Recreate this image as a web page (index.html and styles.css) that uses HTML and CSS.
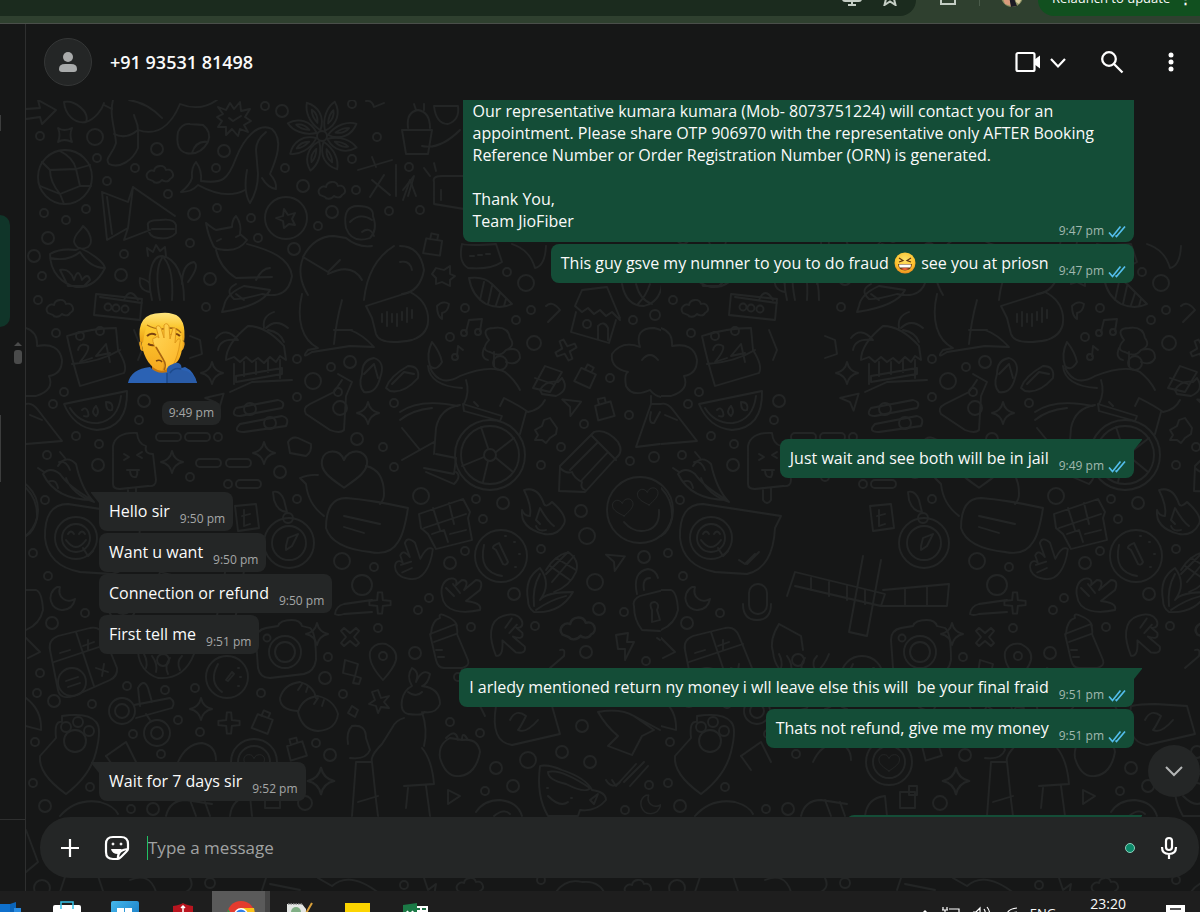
FILE: index.html
```html
<!DOCTYPE html>
<html lang="en">
<head>
    <meta charset="UTF-8">
    <meta name="viewport" content="width=device-width, initial-scale=1.0">
    <title>Chat</title>
    <link rel="stylesheet" href="styles.css">
</head>
<body>

    <!-- shared icons -->
    <svg class="defs" aria-hidden="true">
        <symbol id="ticks" viewBox="0 0 18 13">
            <path d="M1 7.5 L4.5 11.5 L12.5 1.5 M7.5 10.5 L8.5 11.5 L17 1.5" fill="none" stroke="#53bdeb" stroke-width="1.7"/>
        </symbol>
    </svg>

    <div class="browser-bar">
        <div class="browser-row">
            <div class="omnibox">
                <svg width="20" height="20" viewBox="0 0 20 20" fill="none" stroke="#c4cdc4" stroke-width="2"><path d="M1 1 V13 Q1 15 3 15 H17 Q19 15 19 13 V1 M6 19 H14 M10 15 V19"/></svg>
                <svg width="18" height="20" viewBox="0 0 18 20" fill="none" stroke="#c4cdc4" stroke-width="2"><path d="M9 2 L11.500 8 L17 9 L13 13 L14.500 19 L9 15.500 L3.500 19 L5 13 L1 9 L6.500 8 Z"/></svg>
            </div>
            <svg class="ext" width="18" height="20" viewBox="0 0 18 20" fill="none" stroke="#c4cdc4" stroke-width="2"><path d="M2 2 H16 V18 H2 Z"/></svg>
            <span class="bar-sep"></span>
            <svg class="profile" width="24" height="24" viewBox="0 0 24 24">
                <circle cx="12" cy="12" r="11" fill="#8a8f62"/>
                <path d="M3 15 L9 12 L11 22 L5 20 Z" fill="#d99b7c"/>
                <path d="M9 12 L13 12 L17 22 L11 23 Z" fill="#1c1a24"/>
                <path d="M15 12 L22 14 L19 20 L16 18 Z" fill="#d8c79a"/>
            </svg>
            <button class="relaunch">Relaunch to update <span class="relaunch-dots">⋮</span></button>
        </div>
    </div>

    <div class="app">
        <div class="sidebar">
            <div class="side-edge side-edge-small"></div>
            <div class="side-chat"></div>
            <svg class="side-scroll" width="10" height="24" viewBox="0 0 10 24"><path d="M1 5 L5 1 L9 5 Z" fill="#4a4b4b"/><rect x="1" y="9" width="8" height="14" rx="3" fill="#4a4b4b"/></svg>
            <div class="side-edge side-edge-tall"></div>
            <div class="side-foot"></div>
        </div>

        <main class="chat">
            <header class="chat-header">
                <div class="avatar">
                    <svg width="20" height="22" viewBox="0 0 20 22" fill="#a9abab"><circle cx="10" cy="6" r="5"/><path d="M1 18 Q1 13 7 13 H13 Q19 13 19 18 Q19 21 16 21 H4 Q1 21 1 18 Z"/></svg>
                </div>
                <h1 class="contact">+91 93531 81498</h1>
                <button class="icon-btn video-btn" aria-label="Video call">
                    <svg width="26" height="22" viewBox="0 0 26 22"><rect x="1.500" y="2" width="18" height="18" rx="1.500" fill="none" stroke="#fff" stroke-width="2.200"/><path d="M19 9 L25 4.500 V17.500 L19 13 Z" fill="#fff"/></svg>
                    <svg width="18" height="22" viewBox="0 0 18 22" fill="none" stroke="#fff" stroke-width="2.200"><path d="M2 8 L9 15.500 L16 8"/></svg>
                </button>
                <button class="icon-btn" aria-label="Search">
                    <svg width="24" height="24" viewBox="0 0 24 24" fill="none" stroke="#fff" stroke-width="2.300"><circle cx="9" cy="9" r="6.800"/><path d="M14 14 L22.500 22.500"/></svg>
                </button>
                <button class="icon-btn" aria-label="Menu">
                    <svg width="6" height="22" viewBox="0 0 6 22" fill="#fff"><circle cx="3" cy="4" r="2.500"/><circle cx="3" cy="11" r="2.500"/><circle cx="3" cy="18" r="2.500"/></svg>
                </button>
            </header>

            <div class="chat-body">
                <!-- wallpaper tile -->
                <svg class="wallpaper" aria-hidden="true">
                    <defs>
                        <path id="cloud" d="M-12 5 C-16 0 -10 -5 -6 -3 C-5 -9 4 -10 6 -4 C12 -6 16 2 10 5 C8 9 3 7 2 6 C-1 10 -6 9 -7 7 Z"/>
                        <path id="spark" d="M0 -11 Q2 -2 11 0 Q2 2 0 11 Q-2 2 -11 0 Q-2 -2 0 -11 Z"/>
                        <path id="cross" d="M-9 -6 L-6 -9 L0 -4 L6 -9 L9 -6 L4 0 L9 6 L6 9 L0 4 L-6 9 L-9 6 L-4 0 Z"/>
                        <path id="bolt" d="M-8 -11 L4 -13 L3 -4 L10 -4 L1 14 L1 3 L-6 3 Z"/>
                        <path id="dart" d="M-10 -6 L9 -7 L1 9 L-1 0 Z"/>
                        <path id="tag" d="M-8 -5 L8 -6 L9 9 L-8 10 Z M-4 -5 V-11 H3 V-6"/>
                        <path id="heart" d="M0 16 C-10 9 -22 2 -20 -9 C-18 -19 -4 -20 0 -9 C4 -20 20 -19 21 -8 C22 2 10 9 0 16 Z"/>
                        <path id="petal" d="M0 -6 C-9 -16 -10 -28 -6 -36 C4 -30 8 -18 0 -6 M-1 -14 Q-5 -22 -3 -28 Q2 -22 -1 -14"/>
                        <path id="moon" d="M-6 -11 C-18 -4 -12 13 0 12 Q10 11 12 1 C3 6 -6 -1 -3 -11 Z"/>
                        <path id="hand" d="M-16 -2 C-20 -22 2 -24 -2 -13 L4 -18 Q12 -18 6 -8 L18 -18 Q26 -18 22 -8 L8 3 C16 4 24 6 22 12 C4 16 -14 14 -16 -2 Z M-12 -10 L-4 -2 M-5 -14 L2 -5"/>
                    </defs>
                    <pattern id="doodles" patternUnits="userSpaceOnUse" width="635" height="800">
                        <g transform="translate(-26 -100)" fill="none" stroke="#232525" stroke-width="1.800" stroke-linejoin="round" stroke-linecap="round">
                            <!-- top row: arrow, leaf, stocking, peach, burst, whale, anise -->
                            <path d="M26 109 L40 108 L38 100 L56 110 L42 124 L40 117 L26 119"/>
                            <path d="M64 102 C65 115 75 124 86 122 C95 119 102 110 104 103 M64 102 C75 100 90 112 86 122 M104 105 L112 109"/>
                            <path d="M113 100 C109 115 115 128 116 143 C113 154 104 158 109 164 C120 169 133 160 138 148 L138 130 C138 122 135 120 134 115 M114 134 Q126 140 138 130 M138 130 C155 136 170 128 180 104 Q200 112 217 100 M129 100 Q148 103 162 118"/>
                            <path d="M58 128 Q64 132 72 128 Q69 135 72 142 Q64 138 58 142 Q61 135 58 128 Z"/>
                            <path d="M178 132 Q182 123 190 124 L203 125 Q212 132 208 142 Q200 156 186 153 Q175 150 178 132 Z M208 142 Q196 140 192 153"/>
                            <path d="M218 107 L226 110 L230 103 L234 109 L240 102 L241 111 L250 109 L245 117 L251 121 L244 125 L248 132 L240 129 L238 136 L232 129 L226 135 L226 127 L218 127 L222 121 L217 117 L223 114 Z M229 118 L233 121 L241 116"/>
                            <path d="M181 192 Q190 185 192 178 Q191 168 196 162 Q202 170 201 181 C222 184 228 180 236 158 C244 138 258 122 272 129 C284 140 276 160 270 174 Q277 182 276 189 Q268 188 262 178 M181 192 Q192 192 198 185 C218 196 234 196 245 190 M247 170 Q243 192 250 203 Q258 190 258 174 L256 150 Q256 140 266 132"/>
                            <circle cx="322" cy="136" r="5"/>
                            <use href="#petal" transform="translate(322 136) rotate(-15)"/><use href="#petal" transform="translate(322 136) rotate(30)"/><use href="#petal" transform="translate(322 136) rotate(80)"/><use href="#petal" transform="translate(322 136) rotate(118)"/><use href="#petal" transform="translate(322 136) rotate(165)"/><use href="#petal" transform="translate(322 136) rotate(208)"/><use href="#petal" transform="translate(322 136) rotate(250)"/><use href="#petal" transform="translate(322 136) rotate(300)"/>
                            <path d="M366 101 Q372 100 374 107 L384 103 M358 170 L392 160 M372 157 L376 167 M370 197 L384 175 M372 180 L390 195 M396 165 V196 M403 200 L410 180 L416 196"/>
                            <!-- globe, map, lamp, cactus -->
                            <circle cx="65" cy="177" r="27"/>
                            <path d="M42 162 L50 170 L76 169 L90 165 M50 170 C50 180 55 188 60 194 L80 186 L76 169 C74 160 66 154 60 151 M40 186 L60 194 L64 204 M80 186 L91 186"/>
                            <path d="M102 192 L107 240 L128 228 L124 240 L150 230 M102 192 L128 202 L133 187 L175 216 M133 187 L128 228 M107 197 L112 234 M148 226 Q146 220 160 220 Q174 218 176 225 V233 Q170 240 158 238 Q148 237 148 226 Z M152 229 H174"/>
                            <path d="M50 254 Q60 248 76 250 L80 248 C90 252 104 262 105 268 C98 282 88 288 76 287 C62 284 50 272 50 254 Z M50 258 Q68 262 80 252 Q90 268 105 268 M74 242 C74 234 80 232 83 226 C90 232 94 242 88 247 Q78 252 74 242 M60 270 Q70 268 74 280 Q78 266 82 280 Q88 272 90 280 L84 286 H68 Z"/>
                            <path d="M152 300 C146 275 152 256 162 256 C176 258 184 276 184 300 M160 300 Q154 270 162 258 M172 300 Q174 270 164 258 M150 292 Q138 290 140 278 Q148 280 150 284 M182 284 Q182 264 194 262 Q200 266 188 282 M148 256 L147 248 L153 252 L156 245 L160 251 L165 247 L166 256"/>
                            <!-- coin, fox, person -->
                            <circle cx="286" cy="218" r="21"/>
                            <path d="M284 209 L288 215 L295 213 L292 219 L295 225 L289 224 L284 228 L283 221 L276 218 L283 216 Z"/>
                            <path d="M206 223 Q212 228 216 230 L232 227 Q232 220 236 216 Q242 224 240 234 L247 240 Q240 250 228 250 Q214 250 213 245 Q208 235 206 223 Z M217 241 l4 -2 M236 237 l4 -2 M247 244 C270 250 290 258 292 276 Q288 300 262 294 Q240 300 234 299 Q224 290 236 284 M216 250 Q220 268 236 278 L272 277 M256 280 Q262 268 270 268"/>
                            <path d="M346 228 Q342 206 358 206 Q374 206 373 216 Q378 230 370 238 Q352 244 346 228 M350 222 Q360 212 372 220 M362 232 Q370 226 374 236 M303 257 Q314 236 334 236 L346 238 Q358 248 372 246 M303 257 L328 272 L340 260 M303 258 Q296 275 308 295 M328 274 Q352 262 362 280 M364 300 Q368 262 394 246"/>
                            <path d="M302 294 C296 320 302 340 318 348 L308 350 Q300 360 312 352 L350 346 L374 347 Q362 334 350 330 M342 300 Q336 322 334 344 M334 330 H352 M366 306 L410 292 Q426 300 428 316 Q430 334 412 340 Q380 346 376 334 L372 318 Z M382 322 v-8 M387 326 v-14 M392 322 v-8 M397 326 v-12 M402 320 v-8 M407 322 v-14 M412 318 v-8"/>
                            <!-- lamp and pot right of the person -->
                            <path d="M402 130 H432 L428 154 H406 Z M408 128 Q406 112 418 110 Q430 112 430 128 M414 104 L416 110 M424 104 V110 M434 106 Q436 124 448 124 Q460 120 458 106 Z M422 146 Q440 150 460 130"/>
                            <path d="M403 190 L414 176 L408 196 M434 182 Q432 176 442 176 H470 V210 L434 204 Z M441 190 V200 M424 168 L430 176 M434 163 L436 171"/>
                            <path d="M400 246 Q420 246 424 270 Q420 292 402 294 M400 262 Q410 260 412 270 M462 244 Q470 246 496 244 L502 262 Q490 270 468 268 Q458 262 462 244 Z M470 256 h4 M478 255 h4 M486 254 h4 M512 244 Q530 250 535 268 Q545 266 546 246"/>
                            <use href="#tag" transform="translate(433 245) rotate(12)"/>
                            <path d="M436 268 L444 270 L450 266 L450 274 L455 276 L450 280 L450 286 L442 282 L436 284 L436 278 L432 274 Z"/>
                            <!-- shell, house, ball -->
                            <path d="M469 278 Q484 276 492 284 L512 304 Q500 310 486 304 Q472 296 469 278 Z M484 282 L480 300 M492 286 L488 304 M500 293 L496 305 M506 299 L504 306"/>
                            <path d="M575 306 L582 290 L607 287 L620 318 M575 306 L582 312 L588 308 L594 314 L600 310 L606 316 L612 312 L620 320 M576 312 L571 332 L609 343 L616 320 M598 339 V326 Q604 320 608 328 V340"/>
                            <circle cx="587" cy="324" r="4"/>
                            <path d="M622 284 Q626 306 644 306 Q660 302 662 284 M636 284 Q640 300 652 304 M650 284 Q646 296 638 304"/>
                            <!-- music notes, mike, flowers, guitar -->
                            <path d="M437 306 Q443 300 449 304 Q448 312 442 313 L442 319 Q437 316 437 306 M546 306 Q552 300 560 310 L548 322 M466 332 L469 320 L482 319 L480 331 M457 356 L458 346 L463 350"/>
                            <circle cx="464" cy="333" r="3"/><circle cx="478" cy="332" r="3"/><circle cx="455" cy="357" r="3"/>
                            <path d="M489 340 Q480 328 494 328 Q508 326 510 338 Q516 346 506 350 Q500 358 490 352 Q480 350 489 340 M494 352 V366 M506 350 Q520 346 520 358 Q516 366 506 362 M488 360 Q480 358 484 348 M432 342 Q440 352 442 362 Q436 372 430 366 Q426 354 432 342 M430 368 Q440 388 460 376 Q490 364 505 372 Q515 380 520 390"/>
                            <circle cx="500" cy="363" r="7"/>
                            <path d="M428 366 Q430 386 462 388 M533 388 L545 366 L562 372 L550 392 Z M535 378 L553 384"/>
                            <path d="M540 390 Q546 380 558 382 L562 378 Q570 390 556 396 L542 394 Z"/>
                            <use href="#cross" transform="translate(566 350) rotate(20)"/>
                            <use href="#tag" transform="translate(586 376) rotate(28)"/>
                            <!-- tree and volcano -->
                            <path d="M640 347 Q634 328 654 328 Q672 332 670 346 Q692 342 696 360 Q696 374 682 376 Q688 392 670 396 Q658 400 650 390 Q632 398 626 386 Q624 374 628 372 Q610 368 612 354 Q622 340 640 347 Z"/>
                            <path d="M642 360 Q650 350 658 360 M651 396 V404 L636 447 L660 444 M652 404 H661 M26 404 Q32 402 38 410 L62 441 L26 444 M30 415 L42 420 M651 412 Q648 424 654 423 L660 412"/>
                            <path d="M26 328 Q38 332 37 346 Q59 342 62 360 Q62 374 49 376 Q55 390 36 396 L26 396"/>
                            <!-- cassette, calendar, palm hut -->
                            <use href="#cloud" transform="translate(60 308)"/><use href="#cloud" transform="translate(160 174)"/><use href="#cloud" transform="translate(332 190)"/>
                            <path d="M96 294 L142 299 L140 320 L94 315 Z M100 297 L142 303"/>
                            <circle cx="108" cy="307" r="3.500"/><circle cx="116" cy="308" r="3.500"/><circle cx="125" cy="309" r="3.500"/>
                            <path d="M67 336 Q92 328 116 328 L118 350 Q128 366 124 373 L80 386 Q72 360 67 336 Z M72 364 Q100 362 120 350 M78 350 Q80 342 88 346 Q90 350 80 362 L92 358 M96 356 L106 344 L110 362 M96 356 L110 353"/>
                            <circle cx="80" cy="336" r="4"/><circle cx="100" cy="331" r="4"/>
                            <path d="M216 338 Q226 326 238 340 Q220 338 218 350 M264 328 Q262 316 274 312 M266 328 Q276 318 288 328 M268 330 Q280 332 284 342 M226 360 Q226 344 248 326 Q266 326 284 346 L286 360 L280 356 L276 362 L270 357 L264 363 L258 358 L252 362 L246 357 L240 362 L234 357 Z M234 364 V384 M244 362 V376 M256 362 V374 M268 360 V372 M280 360 V378 M236 376 L282 368 V374 L236 382 Z M230 392 L252 382 L292 380"/>
                            <use href="#spark" transform="translate(212 373)"/>
                            <path d="M190 336 L200 340 L202 354 L190 358 M134 330 L142 350 L138 360 M124 300 Q130 286 138 300"/>
                            <path d="M224 306 Q226 294 244 286 L270 290 Q262 306 222 312 Z M236 294 L244 300"/>
                            <!-- sandals, flask -->
                            <path d="M362 374 Q362 360 374 358 Q386 362 380 378 Q376 394 364 392 Q358 386 362 374 Z M364 374 L374 364 L378 378 M386 388 Q390 376 408 366 Q420 366 418 378 Q404 394 390 391 Z M392 384 L404 372 L414 374"/>
                            <path d="M338 374 L352 382 L346 396 L344 430 Q340 434 330 430 L306 414 Q302 408 310 404 L334 392 L342 380"/>
                            <circle cx="340" cy="408" r="7"/><circle cx="338" cy="392" r="4"/>
                            <use href="#spark" transform="translate(368 413)"/>
                            <!-- watermelon and sliders -->
                            <path d="M64 404 L127 391 Q128 428 97 430 Q74 428 64 404 Z M70 408 Q80 424 98 423 Q118 420 121 396 M82 410 q4 -4 6 2 t-4 4 M96 406 q4 6 0 10 q-6 -4 0 -10 M106 402 q8 0 6 8 q-6 2 -6 -8"/>
                            <path d="M236 408 L278 400 Q286 402 282 408 L240 416 Q230 416 236 408 Z M240 424 L282 416 Q290 418 286 426 L244 432 Q232 432 240 424 Z"/>
                            <circle cx="250" cy="409" r="6"/><circle cx="270" cy="423" r="6"/>
                            <rect x="156" y="433" width="25" height="8" rx="4"/><rect x="185" y="433" width="25" height="8" rx="4"/><rect x="196" y="459" width="25" height="8" rx="4"/><rect x="226" y="459" width="25" height="8" rx="4"/><rect x="236" y="480" width="25" height="8" rx="4"/>
                            <use href="#dart" transform="translate(216 402) rotate(-10)"/>
                            <!-- popsicle, chillies -->
                            <path d="M113 484 V446 Q116 432 137 433 Q138 444 146 446 Q144 454 153 454 L156 480 Q156 487 148 486 L120 489 Q113 489 113 484 Z M124 454 l5 3 l-5 3 M142 452 l-5 3 l5 3 M127 470 H139 M130 470 Q130 478 136 477 Q138 474 137 470 M128 488 V500 Q132 506 136 500 V488"/>
                            <path d="M59 462 Q66 460 70 470 M60 452 L65 458 M43 474 Q50 466 60 474 Q68 486 92 500 Q56 500 43 474 Z M58 466 Q66 454 76 464 C80 482 86 494 94 502 Q72 494 66 478 M38 468 L44 472 M48 482 Q56 478 58 488"/>
                            <use href="#spark" transform="translate(172 462)"/><use href="#spark" transform="translate(264 453)"/>
                            <path d="M288 442 Q292 436 298 438 L311 444 Q312 452 306 456 L290 453 Z"/>
                            <!-- hearts and speech bubbles -->
                            <use href="#heart" transform="translate(344 470) scale(1.1)"/>
                            <path d="M300 478 Q310 474 318 475 M300 478 L306 484 Q308 504 324 516 M366 466 Q384 470 384 494 Q384 500 380 504 M326 528 Q326 498 346 498 Q372 500 408 508 Q404 534 398 542 Q390 556 370 552 Q332 548 326 528 Z M344 516 L380 524 M344 527 L364 533"/>
                            <path d="M45 538 Q44 504 68 504 L146 516 L140 528 Q138 568 112 574 L80 572 Q48 566 45 538 Z M235 506 L256 504 L259 528 L238 531 Z M244 510 V526 M242 516 L250 514 M244 526 L250 524"/>
                            <circle cx="76" cy="538" r="21"/><circle cx="76" cy="538" r="14"/><path d="M68 534 q3 -5 6 0 M79 534 q3 -5 6 0 M66 540 Q76 554 86 540 M83 548 l5 8 l5 -5 M104 560 L110 564 L120 554 M112 564 L124 552"/>
                            <circle cx="289" cy="543" r="25"/><circle cx="289" cy="543" r="17"/><path d="M286 546 L288 538 L298 534 L292 546 L286 550 Z"/><circle cx="288" cy="518" r="5"/><path d="M273 492 Q280 490 284 500 L287 512 Q278 512 274 500 Z"/>
                            <path d="M26 488 Q38 500 37 518 Q34 532 26 536"/>
                            <!-- crossword and mic, mostly under the replies -->
                            <path d="M152 596 L160 572 L250 594 L246 606 L160 586 M246 560 L232 636 L214 632 L228 556 M176 578 V590 M194 582 V596 M212 586 V600 M230 590 V604 M248 590 L314 584 L312 606 L246 606 M270 588 V606 M292 586 V606"/>
                            <rect x="114" y="584" width="18" height="30" rx="9"/><path d="M108 604 Q108 620 122 620 Q136 620 136 604"/>
                            <!-- wheelchair sports -->
                            <circle cx="490" cy="455" r="35"/><circle cx="490" cy="455" r="29"/><circle cx="490" cy="455" r="6"/>
                            <path d="M488 448 L481 427 M496 452 L514 438 M496 458 L513 472 M488 461 L483 482 M484 457 L462 466 M463 404 L502 416 L500 421 L464 411 Z M474 402 L478 406 M460 405 Q440 408 436 428 L434 454 M436 454 L456 458 L454 474 L424 468 M402 460 L434 442 M400 412 Q420 398 458 406 M400 420 Q412 410 432 408 M402 428 L420 450 M426 472 L454 484 Q462 476 456 472 M464 404 Q470 392 466 380 M500 406 L504 398 Q520 406 528 412 Q540 410 545 400 M526 412 L520 434"/>
                            <!-- paper darts, tag, pencil, fire -->
                            <use href="#dart" transform="translate(571 407) rotate(10)"/>
                            <use href="#tag" transform="translate(604 409) rotate(-12)"/>
                            <path d="M535 430 L542 426 L544 420 L550 418 L557 428 L556 434 L550 438 L546 443 L542 440 L535 440 L538 435 Z"/>
                            <path d="M560 466 L594 432 Q606 428 618 442 Q624 452 616 458 L585 492 L559 491 Z M560 468 Q566 474 572 472 Q574 478 582 482 Q580 488 585 490 M592 436 L616 460 M598 442 L570 470 M608 452 L582 480"/>
                            <path d="M522 510 Q524 516 530 516 Q532 506 524 490 Q538 486 544 504 Q546 508 552 502 Q568 516 564 524 Q558 536 544 534 Q520 528 522 510 Z M540 524 L536 520 L540 508 Q548 522 554 526 M536 526 Q538 532 546 530"/>
                            <!-- chocolate, clock, corn -->
                            <path d="M419 514 L463 499 L470 512 L468 518 L472 540 L436 549 L428 534 L421 528 Z M433 508 L440 530 M449 503 L454 524 M424 528 L466 514 M450 534 L466 530 M432 534 L444 530 L448 542"/>
                            <circle cx="501" cy="556" r="26"/>
                            <path d="M493 548 Q492 546 499 543 L508 562 Q506 566 503 564 L496 550 Z M484 545 Q478 572 502 576 M505 536 h1 M514 542 h1 M519 554 h1 M515 567 h1"/>
                            <path d="M528 600 Q524 578 540 568 Q552 584 540 600 Q546 592 573 592 Q560 614 534 612 Q528 608 528 600 Z M534 606 Q532 588 540 574 M536 610 Q550 600 566 596 M546 570 Q554 556 568 552 Q580 560 576 572 Q570 586 554 592 M550 566 L570 580 M556 558 L576 570 M574 556 L552 582 M568 552 L546 574"/>
                            <use href="#dart" transform="translate(615 562) rotate(8)"/>
                            <!-- heart eyes -->
                            <circle cx="640" cy="510" r="33"/><circle cx="5" cy="510" r="33"/><use href="#heart" transform="translate(623 508) scale(.5) rotate(-8)"/><use href="#heart" transform="translate(648 497) scale(.5) rotate(-8)"/><path d="M624 522 Q634 534 648 530 Q660 526 659 510"/>
                            <!-- hands, padlock -->
                            <use href="#hand" transform="translate(415 565) scale(.95) rotate(-70)"/>
                            <use href="#hand" transform="translate(458 598)"/>
                            <use href="#hand" transform="translate(504 632) rotate(80)"/>
                            <path d="M634 606 Q632 600 640 596 L664 590 M634 606 Q634 620 642 630 L660 631 M637 594 Q632 572 648 569 Q656 570 658 578 M644 590 Q642 578 650 578 M652 610 Q648 602 655 602 Q660 604 657 610 L660 620 L652 622 Z"/>
                            <path d="M26 590 L36 590 Q42 592 43 610 Q40 624 26 630"/>
                            <!-- bottle, cloud, bolt, cap -->
                            <path d="M430 634 L456 624 Q458 632 457 634 L468 660 Q470 666 462 668 L444 668 Q438 668 436 660 Z M431 634 Q432 620 440 618 Q438 612 446 616 Q456 620 457 626 M434 642 L456 634 M436 650 h6 M438 657 h6"/>
                            <use href="#cloud" transform="translate(578 628) scale(1.3)"/>
                            <use href="#bolt" transform="translate(624 646)"/>
                            <path d="M657 638 L660 640 M26 638 L40 652 L28 658"/>
                            <!-- calculator, basket, stopwatch -->
                            <path d="M50 650 Q48 640 58 636 L90 628 Q100 626 104 636 L117 668 Q118 676 110 680 L74 696 Q60 700 58 690 Z M76 632 L94 686 M54 662 L108 644 M60 653 L70 650 M88 640 V650 M83 646 L94 642 M96 668 L108 672 M104 664 L102 676"/>
                            <circle cx="72" cy="682" r="14"/><path d="M66 681 L78 677 M68 687 L80 683"/>
                            <path d="M144 624 L166 636 L168 650 M144 624 Q134 640 138 652 Q140 672 158 678 Q184 680 194 654 M144 654 q4 8 2 14 M152 656 q6 8 4 16 M168 674 q-4 -8 2 -16 M180 670 q-4 -8 2 -14"/><circle cx="163" cy="660" r="6"/>
                            <circle cx="227" cy="677" r="21"/><path d="M218 664 Q208 682 222 692 M226 680 L232 672 L234 674 L228 681 Z M238 668 h1 M240 677 h1 M238 686 h1"/>
                            <!-- camera, pin, buns, dice -->
                            <circle cx="285" cy="652" r="16"/><circle cx="285" cy="652" r="10"/>
                            <path d="M256 640 Q256 630 266 628 L278 626 Q280 620 292 620 Q300 620 302 626 L310 628 Q316 632 316 660 Q314 672 304 674 L270 678 Q260 678 258 668 Z"/><circle cx="267" cy="638" r="3.500"/>
                            <use href="#spark" transform="translate(317 634)"/><use href="#cross" transform="translate(350 637)"/>
                            <path d="M383 680 Q368 664 370 652 Q374 642 386 644 Q398 650 396 660 Q394 668 383 680 Z"/><circle cx="383" cy="656" r="4"/>
                            <path d="M345 660 L358 664 L355 676 L343 673 Z M355 676 L361 678 L359 684 L353 683 Z M352 706 L358 710 L355 717 L348 713 Z"/>
                            <path d="M335 614 Q336 606 344 604 L372 600 M335 614 Q338 616 344 614 L372 612"/><use href="#cross" transform="translate(380 603) rotate(45)"/>
                            <path d="M298 711 Q280 710 280 698 Q284 684 300 682 Q314 686 316 698 M298 712 Q302 698 318 696 Q334 700 338 714 Q336 730 318 731 Q302 730 298 712 Z M298 690 l4 -6 M306 692 l2 -6 M314 704 l4 -6 M322 706 l2 -6"/>
                            <path d="M378 690 L381 698 L389 696 L384 702 L389 708 L381 707 L378 713 L376 706 L369 704 L375 700 L372 692 Z"/>
                            <!-- scissors, bone, tags -->
                            <circle cx="122" cy="711" r="13"/><circle cx="122" cy="711" r="7"/><circle cx="157" cy="733" r="13"/><circle cx="157" cy="733" r="6"/>
                            <path d="M134 705 L170 698 Q176 702 172 708 L136 718 M140 706 L138 688 Q144 678 148 688 L152 702 M146 714 L150 720"/>
                            <use href="#spark" transform="translate(201 709)"/><use href="#cross" transform="translate(229 723) rotate(45)"/>
                            <use href="#tag" transform="translate(263 722) rotate(24)"/><use href="#tag" transform="translate(296 749) rotate(-14)"/>
                            <!-- paw, cup, donut heart -->
                            <circle cx="75" cy="741" r="11"/><circle cx="66" cy="727" r="5"/><circle cx="78" cy="722" r="5"/><circle cx="89" cy="731" r="5"/>
                            <path d="M62 722 Q54 720 56 738 L40 756 Q38 774 66 794 Q90 776 96 752 Q102 728 96 722 Q88 712 62 716 Z"/>
                            <path d="M106 756 L126 742 L136 762 M26 698 Q42 710 41 730 L26 726"/>
                            <path d="M178 762 Q186 744 202 743 Q216 746 216 760 M106 756 L116 770"/>
                            <circle cx="254" cy="762" r="23"/><circle cx="254" cy="762" r="16"/><use href="#heart" transform="translate(254 763) scale(.5)"/>
                            <use href="#spark" transform="translate(321 781) scale(1.2)"/>
                            <rect x="265" y="792" width="15" height="16"/><rect x="274" y="786" width="8" height="9"/>
                            <path d="M230 816 Q232 798 250 796 L252 816 M166 816 Q170 800 186 800 L212 804 M190 800 L196 816 M205 802 L210 816"/>
                            <!-- people and clothes -->
                            <path d="M348 744 Q346 732 352 726 Q366 724 366 738 L370 750 Q366 760 350 758 M356 762 L372 762 Q370 756 382 744 L392 728 Q396 720 404 718 M356 762 L352 816 M372 762 L376 800 L378 816 M358 802 L378 796"/>
                            <path d="M402 700 Q404 690 412 686 Q406 676 412 668 Q420 672 416 682 Q422 668 430 674 Q428 684 422 686 Q440 688 440 704 Q436 714 424 712 Q424 716 408 714 Q400 712 402 700 M422 712 Q428 730 424 746 M422 748 Q432 760 434 784 L404 786 M408 788 L406 808 M426 786 L430 816 M408 692 q8 6 14 0"/>
                            <path d="M450 738 Q438 744 440 758 Q446 778 460 776 Q476 774 480 752 Q478 738 462 740 Z M458 740 Q456 728 446 738 M462 740 Q462 730 468 740"/>
                            <path d="M496 706 Q506 704 520 704 L552 706 L560 734 L512 745 Q490 742 496 706 Z M510 720 Q516 708 526 716 Q520 728 518 730 Q526 734 538 720"/>
                            <path d="M540 766 Q548 764 562 770 Q586 778 592 790 Q606 792 606 800 Q596 812 580 810 L578 816 H548 Q536 796 540 766 Z M548 772 Q560 768 590 788 Q586 794 566 784 Q548 780 548 772 M548 796 Q560 808 568 802 M547 788 h1 M571 798 h1 M594 804 L598 794 L590 800 Z"/>
                            <path d="M598 712 Q606 726 618 736 L608 746 L632 755 L642 736 L654 730 L634 716 Q620 708 598 712 M634 716 L660 730 M612 780 L616 786 L636 764 M606 780 Q612 790 620 782 M624 782 L644 762 M630 786 L648 766"/>
                            <use href="#moon" transform="translate(651 804) scale(.8)"/><use href="#moon" transform="translate(63 598)"/>
                            <path d="M448 790 L460 796 L448 804 Z M476 812 Q484 800 500 800 Q518 802 522 816 M494 816 Q504 808 510 814 M462 668 Q460 690 472 698 M474 694 L485 716 M560 650 Q566 648 564 656 L550 668"/>
                            <!-- strip under the composer -->
                            <path d="M60 816 Q76 798 100 802 Q114 806 118 814 M26 830 L38 862 L26 872 M60 892 L66 874 M98 876 L104 894 M130 880 Q150 872 156 892 M190 878 Q196 890 180 894 M262 890 L266 878 M270 884 L300 890 M318 878 L332 886 Q350 870 380 894"/>
                            <path d="M424 878 L428 890 L436 884 L434 896 M556 892 Q566 878 582 882 Q600 880 606 896"/><use href="#cloud" transform="translate(470 886)"/><use href="#cloud" transform="translate(638 888)"/>
                        </g>
                        <g transform="translate(-26 -100)" fill="none" stroke="#232525" stroke-width="1.800">
                            <circle cx="95" cy="137" r="8"/><circle cx="40" cy="136" r="4"/><circle cx="157" cy="149" r="6"/><circle cx="97" cy="158" r="4"/><circle cx="135" cy="168" r="4"/><circle cx="107" cy="181" r="4"/><circle cx="224" cy="151" r="6"/><circle cx="216" cy="168" r="4"/><circle cx="265" cy="106" r="4"/><circle cx="282" cy="111" r="6"/><circle cx="285" cy="168" r="4"/><circle cx="303" cy="186" r="6"/><circle cx="352" cy="104" r="4"/><circle cx="377" cy="137" r="4"/><circle cx="352" cy="159" r="4"/><circle cx="356" cy="190" r="4"/><circle cx="389" cy="211" r="4"/><circle cx="332" cy="212" r="6"/><circle cx="318" cy="226" r="4"/><circle cx="294" cy="249" r="6"/><circle cx="258" cy="238" r="4"/><circle cx="251" cy="218" r="4"/><circle cx="217" cy="208" r="4"/><circle cx="194" cy="214" r="6"/><circle cx="190" cy="243" r="4"/><circle cx="168" cy="194" r="4"/><circle cx="210" cy="279" r="6"/><circle cx="44" cy="213" r="4"/><circle cx="86" cy="209" r="4"/><circle cx="66" cy="220" r="4"/><circle cx="48" cy="238" r="6"/><circle cx="34" cy="256" r="6"/><circle cx="42" cy="276" r="4"/><circle cx="124" cy="254" r="4"/><circle cx="121" cy="275" r="6"/>
                            <circle cx="409" cy="167" r="4"/><circle cx="420" cy="210" r="4"/><circle cx="507" cy="272" r="4"/><circle cx="526" cy="283" r="8"/><circle cx="531" cy="310" r="4"/><circle cx="516" cy="320" r="4"/><circle cx="465" cy="308" r="4"/><circle cx="450" cy="337" r="4"/><circle cx="534" cy="343" r="7"/><circle cx="633" cy="320" r="4"/><circle cx="655" cy="315" r="5"/><circle cx="610" cy="378" r="4"/>
                            <circle cx="38" cy="300" r="4"/><circle cx="206" cy="307" r="4"/><circle cx="56" cy="333" r="4"/><circle cx="297" cy="359" r="4"/><circle cx="350" cy="362" r="6"/><circle cx="331" cy="367" r="4"/><circle cx="313" cy="381" r="8"/><circle cx="297" cy="397" r="4"/><circle cx="53" cy="404" r="4"/><circle cx="64" cy="392" r="4"/><circle cx="144" cy="401" r="6"/><circle cx="139" cy="420" r="4"/><circle cx="76" cy="436" r="4"/><circle cx="99" cy="444" r="4"/><circle cx="218" cy="437" r="4"/><circle cx="47" cy="455" r="4"/><circle cx="98" cy="465" r="6"/><circle cx="190" cy="477" r="4"/><circle cx="228" cy="484" r="4"/><circle cx="280" cy="472" r="6"/><circle cx="357" cy="439" r="6"/><circle cx="383" cy="447" r="4"/><circle cx="394" cy="403" r="4"/><circle cx="297" cy="499" r="4"/><circle cx="45" cy="500" r="4"/><circle cx="33" cy="553" r="4"/><circle cx="48" cy="576" r="4"/><circle cx="342" cy="561" r="8"/><circle cx="374" cy="567" r="4"/><circle cx="362" cy="585" r="10"/><circle cx="394" cy="467" r="4"/>
                            <circle cx="421" cy="496" r="8"/><circle cx="476" cy="499" r="4"/><circle cx="503" cy="503" r="6"/><circle cx="483" cy="519" r="4"/><circle cx="541" cy="465" r="4"/><circle cx="561" cy="447" r="4"/><circle cx="584" cy="424" r="4"/><circle cx="629" cy="415" r="4"/><circle cx="630" cy="461" r="4"/><circle cx="654" cy="457" r="5"/><circle cx="581" cy="511" r="6"/><circle cx="587" cy="536" r="8"/><circle cx="541" cy="549" r="4"/><circle cx="465" cy="551" r="4"/><circle cx="450" cy="563" r="6"/><circle cx="595" cy="582" r="8"/><circle cx="644" cy="557" r="6"/><circle cx="599" cy="609" r="6"/><circle cx="514" cy="594" r="6"/><circle cx="429" cy="598" r="4"/><circle cx="418" cy="610" r="4"/><circle cx="624" cy="612" r="4"/><circle cx="471" cy="627" r="4"/><circle cx="535" cy="626" r="4"/><circle cx="586" cy="652" r="6"/><circle cx="646" cy="661" r="4"/><circle cx="415" cy="653" r="6"/>
                            <circle cx="52" cy="623" r="6"/><circle cx="85" cy="613" r="4"/><circle cx="40" cy="673" r="4"/><circle cx="37" cy="693" r="4"/><circle cx="54" cy="701" r="6"/><circle cx="92" cy="704" r="4"/><circle cx="127" cy="686" r="4"/><circle cx="165" cy="690" r="4"/><circle cx="195" cy="688" r="4"/><circle cx="261" cy="693" r="4"/><circle cx="178" cy="720" r="4"/><circle cx="133" cy="734" r="4"/><circle cx="200" cy="732" r="4"/><circle cx="161" cy="754" r="4"/><circle cx="35" cy="742" r="4"/><circle cx="33" cy="783" r="4"/><circle cx="90" cy="787" r="4"/><circle cx="45" cy="806" r="6"/><circle cx="131" cy="809" r="4"/><circle cx="153" cy="809" r="6"/><circle cx="305" cy="803" r="7"/><circle cx="316" cy="743" r="4"/><circle cx="330" cy="755" r="6"/><circle cx="325" cy="678" r="6"/><circle cx="343" cy="694" r="4"/><circle cx="328" cy="657" r="4"/><circle cx="378" cy="628" r="4"/>
                            <circle cx="450" cy="722" r="4"/><circle cx="480" cy="733" r="4"/><circle cx="458" cy="677" r="4"/><circle cx="496" cy="768" r="6"/><circle cx="528" cy="760" r="8"/><circle cx="562" cy="752" r="6"/><circle cx="582" cy="726" r="6"/><circle cx="590" cy="762" r="6"/><circle cx="513" cy="786" r="6"/><circle cx="485" cy="791" r="4"/><circle cx="625" cy="810" r="4"/><circle cx="649" cy="785" r="4"/><circle cx="42" cy="888" r="8"/><circle cx="210" cy="883" r="5"/><circle cx="404" cy="885" r="4"/><circle cx="541" cy="880" r="4"/>
                        </g>
                    </pattern>
                    <rect width="100%" height="100%" fill="url(#doodles)"/>
                </svg>

                <div class="messages">
                    <div class="msg out clipped">
                        <p class="text">Our representative kumara kumara (Mob- 8073751224) will contact you for an
appointment. Please share OTP 906970 with the representative only AFTER Booking
Reference Number or Order Registration Number (ORN) is generated.</p>
                        <p class="text sign">Thank You,
Team JioFiber</p>
                        <span class="meta">9:47 pm <svg class="ticks"><use href="#ticks"/></svg></span>
                    </div>
                    <div class="msg out">
                        <p class="text">This guy gsve my numner to you to do fraud <svg class="emoji" viewBox="0 0 22 22" role="img" aria-label="laughing">
                            <defs><radialGradient id="face" cx=".5" cy=".35" r=".65"><stop offset="0" stop-color="#ffe36b"/><stop offset=".7" stop-color="#fbc02d"/><stop offset="1" stop-color="#ee8a1d"/></radialGradient></defs>
                            <circle cx="11" cy="11" r="10.500" fill="url(#face)"/>
                            <path d="M5 6 L9 8.500 L5 10 M17 6 L13 8.500 L17 10" fill="none" stroke="#5b3410" stroke-width="1.200"/>
                            <path d="M4 12 H18 Q17.500 18.500 11 18.500 Q4.500 18.500 4 12 Z" fill="#6b3a12"/><path d="M5 12.500 H17 L16.500 15.500 H5.500 Z" fill="#fff"/><path d="M7 17 Q11 15 15 17 Q11 19 7 17 Z" fill="#f0603c"/>
                        </svg> see you at priosn</p>
                        <span class="meta">9:47 pm <svg class="ticks"><use href="#ticks"/></svg></span>
                    </div>

                    <div class="big-emoji">
                        <svg width="72" height="74" viewBox="0 0 72 74" role="img" aria-label="man facepalming">
                            <defs>
                                <linearGradient id="hair" x1="0" y1="0" x2="0" y2="1"><stop offset="0" stop-color="#ffe680"/><stop offset=".5" stop-color="#fbc52c"/><stop offset="1" stop-color="#e79a12"/></linearGradient>
                                <linearGradient id="skin" x1="0" y1="0" x2="0" y2="1"><stop offset="0" stop-color="#ffd234"/><stop offset="1" stop-color="#f5a81f"/></linearGradient>
                                <linearGradient id="palm" x1="0" y1="0" x2="1" y2="1"><stop offset="0" stop-color="#ffd85a"/><stop offset="1" stop-color="#fcb526"/></linearGradient>
                            </defs>
                            <path d="M25 46 H48 V62 Q36 70 25 60 Z" fill="#c47710"/>
                            <path d="M1 72 Q4 58 23 56 Q30 64 41 61 L58 56 Q67 60 70 72 Z" fill="#2b62b4"/>
                            <path d="M14 30 Q11 30 13 36 Q13 40 16 40 M55 30 Q59 30 57 36 Q56 40 53 40" fill="#efa51d"/>
                            <path d="M14 22 Q15 6 35 6 Q56 6 56 24 Q56 46 49 52 L40 58 Q34 62 27 57 Q14 47 14 22 Z" fill="url(#skin)"/>
                            <path d="M13 30 Q9 2 34 2 Q40 1 46 3 Q60 6 57 32 L54 22 Q50 17 44 17 Q31 20 20 14 Q17 22 16 32 Z" fill="url(#hair)"/>
                            <path d="M20 14 Q30 20 43 17 Q51 17 54 22" fill="none" stroke="#a96a16" stroke-width="1.300"/>
                            <path d="M20 25 Q24 21 29 24 M44 24 Q49 21 53 25 M21 33 Q25 35 28 34" fill="none" stroke="#7a4310" stroke-width="2"/>
                            <path d="M29 50 Q33 48 35 51" fill="none" stroke="#7a4310" stroke-width="1.500"/>
                            <path d="M28 27 Q30 24 32 27 L29 16 Q32 13 34 17 L37 27 V14 Q40 11 42 15 L43 28 L46 17 Q49 16 49 19 L48 32 L51 28 Q54 27 53 31 Q51 46 45 56 L36 59 Q39 50 34 45 L27 34 Q24 26 28 27 Z" fill="url(#palm)" stroke="#e09a1c" stroke-width="1"/>
                            <path d="M29 36 L36 48 Q40 54 37 59" fill="none" stroke="#a96511" stroke-width="1.500"/>
                            <path d="M40 60 Q39 55 46 53 Q51 50 54 54 L55 59 Q66 60 70 72 H40 Z" fill="#2a5ca8"/>
                            <path d="M43 62 Q47 56 54 58 M40 62 V72" fill="none" stroke="#1d4a8c" stroke-width="1.500"/>
                        </svg>
                        <span class="time-pill">9:49 pm</span>
                    </div>

                    <div class="msg out first">
                        <p class="text">Just wait and see both will be in jail</p>
                        <span class="meta">9:49 pm <svg class="ticks"><use href="#ticks"/></svg></span>
                    </div>

                    <div class="msg in first">
                        <p class="text">Hello sir</p>
                        <span class="meta">9:50 pm</span>
                    </div>
                    <div class="msg in">
                        <p class="text">Want u want</p>
                        <span class="meta">9:50 pm</span>
                    </div>
                    <div class="msg in">
                        <p class="text">Connection or refund</p>
                        <span class="meta">9:50 pm</span>
                    </div>
                    <div class="msg in">
                        <p class="text">First tell me</p>
                        <span class="meta">9:51 pm</span>
                    </div>

                    <div class="msg out first">
                        <p class="text">I arledy mentioned return ny money i wll leave else this will  be your final fraid</p>
                        <span class="meta">9:51 pm <svg class="ticks"><use href="#ticks"/></svg></span>
                    </div>
                    <div class="msg out">
                        <p class="text">Thats not refund, give me my money</p>
                        <span class="meta">9:51 pm <svg class="ticks"><use href="#ticks"/></svg></span>
                    </div>

                    <div class="msg in first">
                        <p class="text">Wait for 7 days sir</p>
                        <span class="meta">9:52 pm</span>
                    </div>

                    <div class="msg out first next"></div>
                </div>

                <button class="scroll-down" aria-label="Scroll to bottom">
                    <svg width="20" height="12" viewBox="0 0 20 12" fill="none" stroke="#b4b6b6" stroke-width="2"><path d="M2 2 L10 10 L18 2"/></svg>
                </button>

                <form class="composer">
                    <button type="button" class="icon-btn" aria-label="Attach">
                        <svg width="18" height="18" viewBox="0 0 18 18" stroke="#fff" stroke-width="2.200"><path d="M9 0 V18 M0 9 H18"/></svg>
                    </button>
                    <button type="button" class="icon-btn sticker" aria-label="Stickers">
                        <svg width="26" height="26" viewBox="0 0 26 26" fill="none" stroke="#fff" stroke-width="2.200"><path d="M24 14 V9 Q24 2 17 2 H9 Q2 2 2 9 V17 Q2 24 9 24 H14 Q15 24 17 22 L22 17 Q24 15 24 14 Z M14 24 Q13 15 24 14"/><circle cx="9" cy="9" r="1" fill="#fff" stroke-width="1"/><circle cx="17" cy="9" r="1" fill="#fff" stroke-width="1"/><path d="M7 14 H18 L14 19 Q8 19 7 14 Z" fill="#fff" stroke="none"/></svg>
                    </button>
                    <input class="composer-input" type="text" placeholder="Type a message" aria-label="Type a message">
                    <span class="status-dot"></span>
                    <button type="button" class="icon-btn" aria-label="Voice message">
                        <svg width="18" height="24" viewBox="0 0 18 24" fill="none" stroke="#fff" stroke-width="2.200"><rect x="6" y="2" width="6" height="12" rx="3"/><path d="M2 11 Q2 18 9 18 Q16 18 16 11 M9 18 V23"/></svg>
                    </button>
                </form>
            </div>
        </main>
    </div>

    <div class="taskbar">
        <div class="tasks">
            <button class="task" aria-label="Outlook"><svg width="30" height="30" viewBox="0 0 30 30"><path d="M13 4 L22 1 V30 H13 Z" fill="#0a63b8"/><path d="M20 7 H27 V30 H20 Z" fill="#2a8be0"/><path d="M20 11 L27 17 L34 9 V30 H20 Z" fill="#fff"/><rect x="0" y="3" width="16" height="27" fill="#0f70cc"/></svg></button>
            <button class="task" aria-label="Store"><svg width="30" height="30" viewBox="0 0 30 30"><rect x="1" y="4" width="28" height="26" rx="2" fill="#fff"/><path d="M9 8 V1 H21 V8" fill="none" stroke="#35c3ea" stroke-width="1.500"/></svg></button>
            <button class="task" aria-label="Windows"><svg width="30" height="30" viewBox="0 0 30 30"><defs><linearGradient id="win" x1="0" y1="0" x2="1" y2="1"><stop offset="0" stop-color="#45b8ec"/><stop offset="1" stop-color="#0f6fbd"/></linearGradient></defs><rect x="1" y="0" width="28" height="30" rx="2" fill="url(#win)"/><path d="M7 7 H14 V20 H7 Z M15 7 H22 V20 H15 Z" fill="#fff"/></svg></button>
            <button class="task" aria-label="Shield"><svg width="30" height="30" viewBox="0 0 30 30"><path d="M5 5 Q12 4 15 2 Q18 4 25 5 V20 L15 28 L5 20 Z" fill="#b9151f"/><path d="M15 5 V18 M13 7 L15 5 L17 7" fill="none" stroke="#fff" stroke-width="1.500"/></svg></button>
            <button class="task active" aria-label="Chrome"><svg width="30" height="30" viewBox="0 0 30 30"><circle cx="15" cy="14" r="14" fill="#e33b2e"/><path d="M15 7 H28 Q31 20 20 27 L15 28 Z" fill="#f9c21a"/><path d="M2 8 L10 20 L16 28 Q2 26 1 14 Z" fill="#279a4b"/><circle cx="15" cy="14" r="7" fill="#fff"/><circle cx="15" cy="14" r="5.500" fill="#2f7fe8"/></svg></button>
            <button class="task" aria-label="Notepad++"><svg width="30" height="30" viewBox="0 0 30 30"><path d="M3 3 H18 L22 8 V30 H3 Z" fill="#e4e6e4"/><path d="M4 3 H18" stroke="#888" stroke-width="1.500" stroke-dasharray="1.500 1"/><circle cx="12" cy="11" r="5" fill="#7fae84"/><path d="M28 2 L21 14" stroke="#d9a03a" stroke-width="2"/></svg></button>
            <button class="task" aria-label="Sticky notes"><svg width="30" height="30" viewBox="0 0 30 30"><rect x="3" y="2" width="25" height="28" fill="#fcd400"/></svg></button>
            <button class="task" aria-label="Excel"><svg width="30" height="30" viewBox="0 0 30 30"><path d="M14 5 H28 V30 H14 Z" fill="#fff"/><path d="M16 8 H20 M22 8 H26 M16 12 H20 M22 12 H26" stroke="#1d7044" stroke-width="2"/><path d="M3 4 L17 2 V30 H3 Z" fill="#1b7a46"/><path d="M7 10 L13 19 M13 10 L7 19" stroke="#fff" stroke-width="2"/></svg></button>
        </div>
        <div class="tray">
            <svg width="10" height="14" viewBox="0 0 10 14" fill="none" stroke="#fff" stroke-width="1.500"><path d="M1 9 L5 5 L9 9"/></svg>
            <svg width="18" height="14" viewBox="0 0 18 14" fill="none" stroke="#fff" stroke-width="1.200"><path d="M7 3 H17 V12 H3 V7 M0 4 H6 M1 1 V4 M5 1 V4 M3 4 V8"/></svg>
            <svg width="20" height="14" viewBox="0 0 20 14" fill="none" stroke="#fff" stroke-width="1.200"><path d="M1 6 H4 L8 2 V14 M12 3 Q14 6 13 10 M15 1 Q19 6 17 12"/></svg>
            <svg width="14" height="14" viewBox="0 0 14 14" fill="none" stroke="#fff" stroke-width="1.200"><path d="M2 12 Q2 3 13 2 M6 12 Q7 6 13 6"/></svg>
            <span class="lang">ENG</span>
            <span class="clock">23:20</span>
            <svg class="notify" width="20" height="18" viewBox="0 0 20 18"><path d="M0 1 H19 V16 H0 Z" fill="#fff"/><path d="M4 5 H15 M4 9 H15" stroke="#1e1e1e" stroke-width="1.500"/></svg>
        </div>
    </div>

</body>
</html>
```

FILE: styles.css
```css
* {
    box-sizing: border-box;
}
body {
    margin: 0;
    height: 100vh;
    display: flex;
    flex-direction: column;
    overflow: hidden;
    font-family: "Open Sans", "Noto Sans", sans-serif;
    background-color: #161717;
    color: #fafafa;
}
button {
    background: none;
    border: none;
    padding: 0;
    color: inherit;
    font-family: inherit;
    cursor: pointer;
}
svg {
    display: block;
    flex: none;
}
.defs {
    position: absolute;
    width: 0;
    height: 0;
}

/* browser toolbar */
.browser-bar {
    flex: none;
    height: 24px;
    display: flex;
    align-items: flex-end;
    overflow: hidden;
    background-color: #2f402f;
    border-bottom: 1px solid #4a4f4a;
}
.browser-row {
    flex: 1;
    display: flex;
    align-items: flex-end;
    height: 40px;
    padding-bottom: 7px;
}
.omnibox {
    flex: 1;
    display: flex;
    justify-content: flex-end;
    gap: 19px;
    height: 32px;
    padding: 0 17px 0 0;
    align-items: center;
    background-color: #1b2b1e;
    border-radius: 0 16px 16px 0;
}
.omnibox svg {
    margin-bottom: 8px;
}
.ext {
    margin: 0 22px 10px 23px;
}
.bar-sep {
    width: 1px;
    height: 20px;
    margin-bottom: 10px;
    background-color: #4b5c4b;
}
.profile {
    margin: 0 14px 8px 20px;
}
.relaunch {
    display: flex;
    flex: none;
    gap: 9px;
    height: 32px;
    width: 162px;
    padding: 5px 0 0 14px;
    background-color: #11501f;
    border-radius: 16px 0 0 16px;
    font-size: 13px;
    line-height: 18px;
    white-space: nowrap;
}
.relaunch-dots {
    font-weight: bold;
}

.app {
    flex: 1;
    min-height: 0;
    display: flex;
}

/* chat list edge */
.sidebar {
    flex: none;
    width: 26px;
    display: flex;
    flex-direction: column;
    border-right: 1px solid #2e2f2f;
}
.side-edge {
    width: 1px;
    background-color: #3c3d3d;
}
.side-edge-small {
    height: 16px;
    margin-top: 91px;
}
.side-chat {
    width: 10px;
    height: 112px;
    margin-top: 84px;
    background-color: #103529;
    border-radius: 0 10px 10px 0;
}
.side-scroll {
    align-self: flex-end;
    margin: 14px 2px 0 0;
}
.side-edge-tall {
    height: 67px;
    margin-top: 50px;
}
.side-foot {
    height: 72px;
    margin-top: auto;
    border-top: 1px solid #2e2f2f;
}

.chat {
    flex: 1;
    min-width: 0;
    display: flex;
    flex-direction: column;
}
.chat-header {
    flex: none;
    display: flex;
    align-items: center;
    height: 76px;
    padding: 0 26px 1px 18px;
}
.avatar {
    display: flex;
    align-items: center;
    justify-content: center;
    width: 48px;
    height: 48px;
    border: 1px solid #353737;
    border-radius: 50%;
    background-color: #242626;
}
.contact {
    flex: 1;
    margin: 0 0 0 18px;
    font-size: 18px;
    font-weight: 600;
}
.icon-btn {
    display: flex;
    align-items: center;
}
.video-btn {
    gap: 8px;
}
.chat-header .icon-btn + .icon-btn {
    margin-left: 33px;
}
.chat-header .icon-btn:last-child {
    margin-left: 44px;
}

.chat-body {
    position: relative;
    flex: 1;
    min-height: 0;
    display: flex;
    flex-direction: column;
}
.wallpaper {
    position: absolute;
    inset: 0;
    width: 100%;
    height: 100%;
}
.messages {
    position: relative;
    flex: 1;
    min-height: 0;
    display: flex;
    flex-direction: column;
    gap: 2px;
    overflow: hidden;
    padding: 0 66px 0 73px;
}

/* bubbles */
.msg {
    position: relative;
    flex: none;
    display: flex;
    align-items: flex-end;
    gap: 10px;
    min-height: 39px;
    padding: 8px 8px 9px 10px;
    border-radius: 8px;
    font-size: 16px;
    line-height: 22px;
}
.in {
    align-self: flex-start;
    background-color: #242626;
}
.out {
    align-self: flex-end;
    background-color: #144d37;
}
.text {
    margin: 0;
    white-space: pre-wrap;
}
.meta {
    display: flex;
    align-items: center;
    gap: 4px;
    margin-bottom: -6px;
    font-size: 12px;
    line-height: 18px;
    white-space: nowrap;
    color: #a5a7a7;
}
.out .meta {
    color: #a1b8af;
}
.ticks {
    width: 18px;
    height: 13px;
}
.clipped {
    display: grid;
    grid-template-columns: 1fr auto;
    gap: 22px 0;
    padding-top: 0;
    padding-bottom: 10px;
    border-radius: 0 0 8px 8px;
}
.clipped .text:first-child {
    grid-column: span 2;
    padding-right: 32px;
}
.clipped .meta {
    margin-bottom: -8px;
}
.emoji {
    display: inline-block;
    width: 22px;
    height: 22px;
    margin: 0 1px;
    vertical-align: bottom;
}
.first {
    margin-top: 12px;
}
.first::before {
    content: "";
    position: absolute;
    top: 0;
    width: 8px;
    height: 11px;
    background-color: inherit;
}
.out.first {
    border-top-right-radius: 0;
}
.out.first::before {
    left: 100%;
    clip-path: polygon(0 0, 100% 0, 100% 10%, 0 100%);
}
.in.first {
    border-top-left-radius: 0;
}
.in.first::before {
    right: 100%;
    clip-path: polygon(0 0, 100% 0, 100% 100%, 0 10%);
}
.next {
    width: 288px;
}

.big-emoji {
    align-self: flex-start;
    display: flex;
    flex-direction: column;
    align-items: flex-end;
    gap: 16px;
    margin: 26px 0 0 28px;
    width: 94px;
}
.big-emoji svg {
    align-self: flex-start;
}
.time-pill {
    padding: 3px 7px;
    border-radius: 8px;
    background-color: #242626;
    font-size: 12px;
    line-height: 18px;
    white-space: nowrap;
    color: #a5a7a7;
}

.scroll-down {
    position: absolute;
    right: 0;
    bottom: 94px;
    display: flex;
    align-items: center;
    justify-content: center;
    width: 52px;
    height: 52px;
    border-radius: 50%;
    background-color: #242626;
}

/* composer */
.composer {
    position: relative;
    flex: none;
    display: flex;
    align-items: center;
    height: 61px;
    margin: 0 1px 13px 14px;
    padding: 0 21px;
    border-radius: 30px;
    background-color: #242626;
}
.composer .sticker {
    margin: 0 17px 0 25px;
}
.composer-input {
    flex: 1;
    min-width: 0;
    height: 24px;
    padding: 0;
    border: none;
    border-left: 1px solid #21c063;
    outline: none;
    background: none;
    color: #fafafa;
    font-family: inherit;
    font-size: 17px;
}
.composer-input::placeholder {
    color: #a0a2a2;
}
.status-dot {
    width: 10px;
    height: 10px;
    margin-right: 25px;
    border: 1px solid #8fd0bd;
    border-radius: 50%;
    background-color: #0c8a6a;
}

/* system taskbar */
.taskbar {
    flex: none;
    display: flex;
    justify-content: space-between;
    height: 21px;
    overflow: hidden;
    background-color: #1e1e1e;
}
.tasks {
    display: flex;
    margin-left: -20px;
}
.task {
    width: 58px;
    height: 40px;
    padding: 9px 0 0 14px;
}
.active {
    background: linear-gradient(to right, #5a5a5a 53px, #444 53px);
}
.tray {
    display: flex;
    gap: 12px;
    height: 40px;
    padding: 15px 14px 0 0;
    font-size: 13px;
    line-height: 20px;
}
.lang {
    margin-top: -3px;
}
.clock {
    margin: -12px 0 0 22px;
    font-size: 14px;
}
.notify {
    margin: -2px 0 0 28px;
}
```
